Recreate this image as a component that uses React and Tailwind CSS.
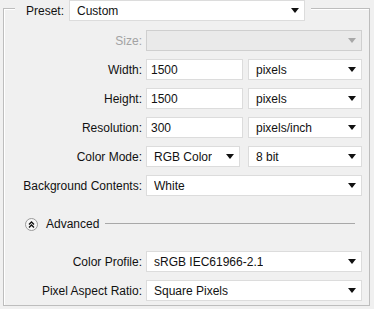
import React from "react"

const font = { fontFamily: '"Liberation Sans", Arial, sans-serif' }

function Arrow({ disabled }) {
  return (
    <svg width="8" height="5" viewBox="0 0 8 5" className="shrink-0">
      <path d="M0 0 L8 0 L4 5 Z" fill={disabled ? "#a8a8a8" : "#111"} />
    </svg>
  )
}

function Select({ value, width, disabled }) {
  return (
    <div
      className={`flex h-[21px] items-center justify-between border pl-[7px] pr-[5px] ${
        disabled ? "border-[#cfcfcf] bg-[#eaeaea]" : "border-[#dcdcdc] bg-white"
      }`}
      style={{ width }}
    >
      <span className="truncate text-[12px] text-[#111]">{value}</span>
      <Arrow disabled={disabled} />
    </div>
  )
}

function Input({ value, width }) {
  return (
    <div
      className="flex h-[21px] items-center border border-[#dcdcdc] bg-white pl-[4px]"
      style={{ width }}
    >
      <span className="text-[12px] text-[#111]">{value}</span>
    </div>
  )
}

function Row({ label, disabled, children }) {
  return (
    <div className="flex items-center">
      <div
        className={`w-[138px] text-right text-[12px] ${disabled ? "text-[#a3a3a3]" : "text-[#111]"}`}
      >
        {label}
      </div>
      <div className="ml-[4px] flex items-center gap-[5px]">{children}</div>
    </div>
  )
}

export default function App() {
  return (
    <div className="h-[309px] w-[374px] overflow-hidden bg-[#f0f0f0] pl-[3px] pt-[8px]" style={font}>
      <div className="h-[298px] w-[367px] border border-[#bdbdbd] shadow-[inset_1px_1px_0_#ffffff]">
        <div className="-mt-[9px] ml-[11px] flex w-fit items-center bg-[#f0f0f0] pl-[11px] pr-[6px]">
          <span className="mr-[5px] text-[12px] text-[#111]">Preset:</span>
          <Select value="Custom" width={236} />
        </div>

        <div className="mt-[9px] flex flex-col gap-[8px]">
          <Row label="Size:" disabled>
            <Select value="" width={216} disabled />
          </Row>
          <Row label="Width:">
            <Input value="1500" width={97} />
            <Select value="pixels" width={114} />
          </Row>
          <Row label="Height:">
            <Input value="1500" width={97} />
            <Select value="pixels" width={114} />
          </Row>
          <Row label="Resolution:">
            <Input value="300" width={97} />
            <Select value="pixels/inch" width={114} />
          </Row>
          <Row label="Color Mode:">
            <div className="mr-[3px]">
              <Select value="RGB Color" width={94} />
            </div>
            <Select value="8 bit" width={114} />
          </Row>
          <Row label="Background Contents:">
            <Select value="White" width={216} />
          </Row>
        </div>

        <div className="mt-[19px] flex items-center pl-[21px] pr-[14px]">
          <div className="flex h-[13px] w-[13px] items-center justify-center rounded-full border border-[#9a9a9a] bg-[#f7f7f7]">
            <svg width="7" height="7" viewBox="0 0 7 7">
              <path d="M1 3.5 L3.5 1 L6 3.5 M1 6.5 L3.5 4 L6 6.5" stroke="#111" strokeWidth="1.3" fill="none" />
            </svg>
          </div>
          <span className="ml-[8px] text-[12px] text-[#111]">Advanced</span>
          <div className="ml-[6px] h-[2px] flex-1 border-t border-[#a8a8a8] border-b-white" />
        </div>

        <div className="mt-[18px] flex flex-col gap-[8px]">
          <Row label="Color Profile:">
            <Select value="sRGB IEC61966-2.1" width={216} />
          </Row>
          <Row label="Pixel Aspect Ratio:">
            <Select value="Square Pixels" width={216} />
          </Row>
        </div>
      </div>
    </div>
  )
}
